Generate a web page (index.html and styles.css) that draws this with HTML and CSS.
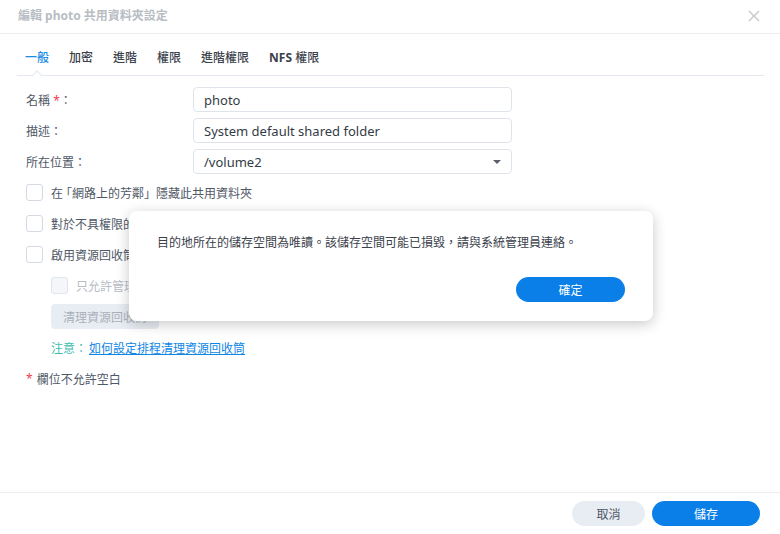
FILE: index.html
```html
<!DOCTYPE html>
<html lang="zh-Hant">
<head>
<meta charset="utf-8">
<title>編輯 photo 共用資料夾設定</title>
<link rel="stylesheet" href="styles.css">
</head>
<body>
<div class="window">
  <div class="header">
    <div class="title">編輯 photo 共用資料夾設定</div>
    <svg class="close" width="12" height="12" viewBox="0 0 12 12"><path d="M1 1L11 11M11 1L1 11" stroke="#c3c8ce" stroke-width="1.4" fill="none"/></svg>
  </div>
  <div class="tabs">
    <div class="tab active">一般</div>
    <div class="tab">加密</div>
    <div class="tab">進階</div>
    <div class="tab">權限</div>
    <div class="tab">進階權限</div>
    <div class="tab"><span class="latin-bold">NFS</span> 權限</div>
  </div>
  <div class="form">
    <div class="row">
      <div class="label">名稱 <span class="req">*</span>：</div>
      <div class="input">photo</div>
    </div>
    <div class="row">
      <div class="label">描述：</div>
      <div class="input">System default shared folder</div>
    </div>
    <div class="row">
      <div class="label">所在位置：</div>
      <div class="input select">/volume2<span class="caret"></span></div>
    </div>
    <div class="row">
      <span class="cb"></span><span class="cbtext">在<span class="half">「</span>網路上的芳鄰<span class="full">」</span>隱藏此共用資料夾</span>
    </div>
    <div class="row">
      <span class="cb"></span><span class="cbtext">對於不具權限的使用者隱藏子資料夾與檔案</span>
    </div>
    <div class="row">
      <span class="cb"></span><span class="cbtext">啟用資源回收筒</span>
    </div>
    <div class="row sub">
      <span class="cb disabled"></span><span class="cbtext disabled-text">只允許管理員存取</span>
    </div>
    <div class="row sub">
      <div class="btn-disabled">清理資源回收筒</div>
    </div>
    <div class="row sub">
      <span class="note">注意：</span><a class="link">如何設定排程清理資源回收筒</a>
    </div>
    <div class="row">
      <span class="req star">*</span><span class="hint">欄位不允許空白</span>
    </div>
  </div>
  <div class="footer">
    <div class="btn secondary">取消</div>
    <div class="btn primary wide">儲存</div>
  </div>

  <div class="modal">
    <div class="modal-text">目的地所在的儲存空間為唯讀。該儲存空間可能已損毀，請與系統管理員連絡。</div>
    <div class="modal-actions">
      <div class="btn primary ok">確定</div>
    </div>
  </div>
</div>
</body>
</html>
```
FILE: styles.css
```css
* { box-sizing: border-box; }
html, body { margin: 0; padding: 0; }
body {
  font-family: "Noto Sans", "Noto Sans CJK TC", sans-serif;
  font-size: 12px;
  color: #4f5866;
  background: #fff;
}
.window {
  position: relative;
  width: 780px;
  height: 534px;
  display: flex;
  flex-direction: column;
  overflow: hidden;
}
.header {
  height: 34px;
  border-bottom: 1px solid #e9edf1;
  display: flex;
  align-items: center;
  justify-content: space-between;
  padding: 0 20px 0 18px;
  flex: none;
}
.title {
  font-weight: bold;
  color: #b8bdc4;
  font-size: 12px;
  line-height: 16px;
  margin-top: -2px;
}
.close { margin-top: -2px; }
.tabs {
  margin: 0 16px 0 17px;
  height: 42px;
  border-bottom: 1px solid #e3e9ef;
  display: flex;
  align-items: flex-end;
  gap: 20px;
  padding-left: 8px;
  flex: none;
}
.tab {
  position: relative;
  font-size: 12px;
  line-height: 16px;
  padding-bottom: 9px;
  color: #3b414b;
  font-weight: 500;
}
.latin-bold { font-weight: bold; }
.tab.active { color: #1a8de6; }
.tab.active::after {
  content: "";
  position: absolute;
  left: 50%;
  bottom: -5px;
  width: 7px;
  height: 7px;
  margin-left: -4px;
  background: #fff;
  border-left: 1px solid #e3e9ef;
  border-top: 1px solid #e3e9ef;
  transform: rotate(45deg);
}
.form {
  flex: 1;
  padding: 11px 26px 0 26px;
  display: flex;
  flex-direction: column;
  gap: 6px;
}
.row {
  height: 25px;
  display: flex;
  align-items: center;
}
.row.sub { padding-left: 25px; }
.label {
  width: 167px;
  color: #4f5866;
}
.req { color: #ef3e4a; }
.input {
  width: 319px;
  height: 25px;
  border: 1px solid #dfe4ea;
  border-radius: 4px;
  padding: 0 10px;
  display: flex;
  align-items: center;
  color: #333b46;
  font-size: 13px;
  position: relative;
}
.select .caret {
  position: absolute;
  right: 10px;
  top: 10px;
  width: 0;
  height: 0;
  border-left: 4px solid transparent;
  border-right: 4px solid transparent;
  border-top: 4px solid #5a616b;
}
.cb {
  width: 17px;
  height: 17px;
  border: 1px solid #d3dae3;
  border-radius: 3px;
  background: #fff;
  flex: none;
}
.cb.disabled { background: #f4f6f9; border-color: #e1e6ec; }
.cbtext { margin-left: 8px; color: #4f5866; }
.half { font-family: "Noto Sans CJK TC", sans-serif; font-feature-settings: "halt"; margin-left: 3px; }
.full { font-family: "Noto Sans CJK TC", sans-serif; }
.disabled-text { color: #b7bdc5; }
.btn-disabled {
  width: 108px;
  height: 25px;
  background: #e8edf3;
  border-radius: 4px;
  color: #a8b0ba;
  display: flex;
  align-items: center;
  justify-content: center;
}
.note { color: #3fbcb0; }
.link {
  color: #0f86e4;
  text-decoration: underline;
  margin-left: 2px;
}
.star { margin-right: 4px; }
.hint { color: #4f5866; }
.footer {
  height: 42px;
  border-top: 1px solid #e9edf1;
  flex: none;
  display: flex;
  justify-content: flex-end;
  gap: 7px;
  padding: 8px 20px 0 0;
}
.btn {
  height: 25px;
  border-radius: 13px;
  display: flex;
  align-items: center;
  justify-content: center;
  font-size: 12px;
}
.secondary {
  width: 73px;
  background: #e8edf3;
  color: #4f5866;
}
.primary {
  background: #0a7fe8;
  color: #fff;
}
.wide { width: 108px; }
.modal {
  position: absolute;
  left: 129px;
  top: 211px;
  width: 524px;
  height: 110px;
  background: #fff;
  border-radius: 8px;
  box-shadow: 0 3px 14px rgba(0, 0, 0, 0.22);
  padding: 24px 28px 0 28px;
  display: flex;
  flex-direction: column;
}
.modal-text {
  line-height: 16px;
  color: #3b414b;
}
.modal-actions {
  display: flex;
  justify-content: flex-end;
  margin-top: 26px;
}
.ok { width: 109px; }
```
